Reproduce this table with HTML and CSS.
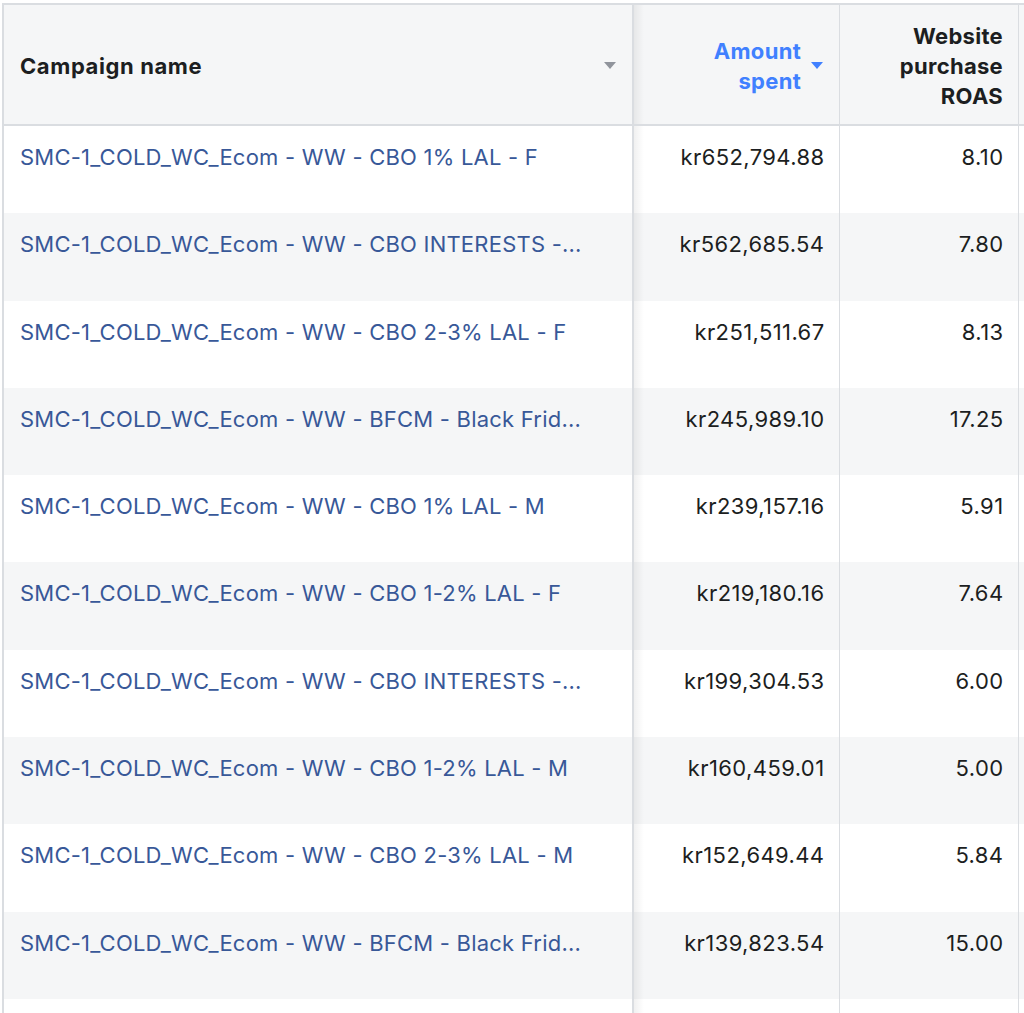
FILE: index.html
```html
<!DOCTYPE html>
<html>
<head>
<meta charset="utf-8">
<link rel="stylesheet" href="styles.css">
</head>
<body>
<div class="table">
  <div class="row head">
    <div class="cell c1"><span class="htext">Campaign name</span><span class="caret gray"></span></div>
    <div class="cell c2"><span class="htext blue">Amount<br>spent</span><span class="caret blue-c"></span></div>
    <div class="cell c3"><span class="htext">Website<br>purchase<br>ROAS</span></div>
    <div class="cell c4"></div>
  </div>
  <div class="row"><div class="cell c1"><span class="link">SMC-1_COLD_WC_Ecom - WW - CBO 1% LAL - F</span></div><div class="cell c2 num">kr652,794.88</div><div class="cell c3 num">8.10</div><div class="cell c4"></div></div>
  <div class="row alt"><div class="cell c1"><span class="link">SMC-1_COLD_WC_Ecom - WW - CBO INTERESTS -...</span></div><div class="cell c2 num">kr562,685.54</div><div class="cell c3 num">7.80</div><div class="cell c4"></div></div>
  <div class="row"><div class="cell c1"><span class="link">SMC-1_COLD_WC_Ecom - WW - CBO 2-3% LAL - F</span></div><div class="cell c2 num">kr251,511.67</div><div class="cell c3 num">8.13</div><div class="cell c4"></div></div>
  <div class="row alt"><div class="cell c1"><span class="link">SMC-1_COLD_WC_Ecom - WW - BFCM - Black Frid...</span></div><div class="cell c2 num">kr245,989.10</div><div class="cell c3 num">17.25</div><div class="cell c4"></div></div>
  <div class="row"><div class="cell c1"><span class="link">SMC-1_COLD_WC_Ecom - WW - CBO 1% LAL - M</span></div><div class="cell c2 num">kr239,157.16</div><div class="cell c3 num">5.91</div><div class="cell c4"></div></div>
  <div class="row alt"><div class="cell c1"><span class="link">SMC-1_COLD_WC_Ecom - WW - CBO 1-2% LAL - F</span></div><div class="cell c2 num">kr219,180.16</div><div class="cell c3 num">7.64</div><div class="cell c4"></div></div>
  <div class="row"><div class="cell c1"><span class="link">SMC-1_COLD_WC_Ecom - WW - CBO INTERESTS -...</span></div><div class="cell c2 num">kr199,304.53</div><div class="cell c3 num">6.00</div><div class="cell c4"></div></div>
  <div class="row alt"><div class="cell c1"><span class="link">SMC-1_COLD_WC_Ecom - WW - CBO 1-2% LAL - M</span></div><div class="cell c2 num">kr160,459.01</div><div class="cell c3 num">5.00</div><div class="cell c4"></div></div>
  <div class="row"><div class="cell c1"><span class="link">SMC-1_COLD_WC_Ecom - WW - CBO 2-3% LAL - M</span></div><div class="cell c2 num">kr152,649.44</div><div class="cell c3 num">5.84</div><div class="cell c4"></div></div>
  <div class="row alt"><div class="cell c1"><span class="link">SMC-1_COLD_WC_Ecom - WW - BFCM - Black Frid...</span></div><div class="cell c2 num">kr139,823.54</div><div class="cell c3 num">15.00</div><div class="cell c4"></div></div>
  <div class="row"><div class="cell c1"></div><div class="cell c2"></div><div class="cell c3"></div><div class="cell c4"></div></div>
</div>
</body>
</html>
```

FILE: styles.css
```css
html, body {
  margin: 0;
  padding: 0;
  background: #ffffff;
  overflow: hidden;
}
body {
  font-family: "Inter", "Liberation Sans", sans-serif;
  color: #1c1e21;
  height: 1013px;
}
.table {
  margin-top: 3px;
  margin-left: 2px;
  border-top: 2px solid #dadde1;
  border-left: 2px solid #dadde1;
}
.row {
  display: grid;
  grid-template-columns: 630px 206px 179px 10px;
  height: 87.3px;
  background: #ffffff;
}
.row.alt {
  background: #f5f6f7;
}
.row.head {
  height: 119px;
  background: #f5f6f7;
  border-bottom: 2px solid #dadde1;
}
.cell {
  box-sizing: border-box;
  font-size: 22px;
  line-height: 26px;
  padding-top: 18px;
}
.c1 {
  padding-left: 16px;
  padding-right: 18px;
  border-right: 2px solid #dadde1;
  position: relative;
}
.c1::after {
  content: "";
  position: absolute;
  top: 0;
  bottom: 0;
  right: -12px;
  width: 10px;
  background: linear-gradient(to right, rgba(0,0,0,0.06), rgba(0,0,0,0));
}
.c2 {
  border-right: 1.5px solid #dadde1;
  padding-right: 14.5px;
  text-align: right;
}
.c3 {
  border-right: 1.5px solid #dadde1;
  padding-right: 14.5px;
  text-align: right;
}
.head .cell {
  display: flex;
  align-items: center;
  padding-top: 2px;
  font-weight: 700;
  font-size: 22px;
  line-height: 30px;
  letter-spacing: 0.3px;
}
.head .c1 {
  justify-content: space-between;
  letter-spacing: 0.6px;
}
.head .c2, .head .c3 {
  justify-content: flex-end;
  text-align: right;
}
.head .c2 {
  padding-right: 16px;
}
.head .c3 {
  padding-right: 15px;
}
.htext.blue {
  color: #4080ff;
}
.caret {
  width: 0;
  height: 0;
  border-left: 6px solid transparent;
  border-right: 6px solid transparent;
  border-top: 7px solid #90949c;
}
.caret.gray {
  margin-right: -2px;
  margin-top: 0;
}
.caret.blue-c {
  border-top-color: #4080ff;
  margin-left: 10px;
  align-self: center;
  margin-bottom: 1px;
}
.link {
  color: #385898;
  white-space: nowrap;
  letter-spacing: 0.22px;
}
.num {
  color: #1c1e21;
  letter-spacing: 0.4px;
}
```
